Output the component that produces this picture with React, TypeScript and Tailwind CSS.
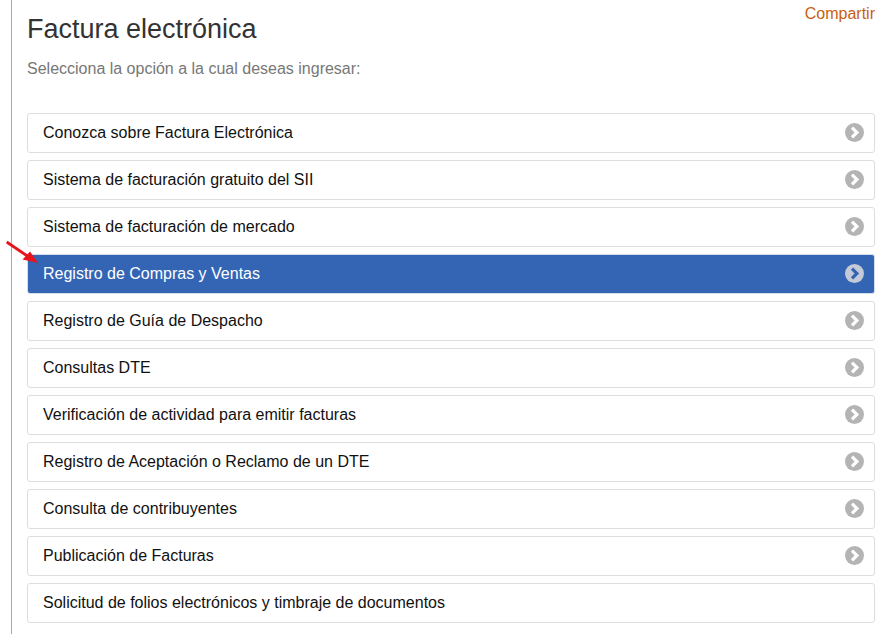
const OPTIONS = [
  { label: "Conozca sobre Factura Electrónica", arrow: true },
  { label: "Sistema de facturación gratuito del SII", arrow: true },
  { label: "Sistema de facturación de mercado", arrow: true },
  { label: "Registro de Compras y Ventas", arrow: true, active: true },
  { label: "Registro de Guía de Despacho", arrow: true },
  { label: "Consultas DTE", arrow: true },
  { label: "Verificación de actividad para emitir facturas", arrow: true },
  { label: "Registro de Aceptación o Reclamo de un DTE", arrow: true },
  { label: "Consulta de contribuyentes", arrow: true },
  { label: "Publicación de Facturas", arrow: true },
  { label: "Solicitud de folios electrónicos y timbraje de documentos", arrow: false },
];

function ChevronCircle({ active }: { active?: boolean }) {
  return (
    <svg
      className={[
        "mb-[2px] h-[19px] w-[19px]",
        active ? "text-[#c3c9d6]" : "text-[#b4b4b4]",
      ].join(" ")}
      viewBox="0 0 19 19"
      aria-hidden
    >
      <circle cx="9.5" cy="9.5" r="9.5" fill="currentColor" />
      <path
        d="M7 4.6 11.9 9.5 7 14.4"
        fill="none"
        stroke={active ? "#3465b5" : "#fff"}
        strokeWidth="3.2"
      />
    </svg>
  );
}

export default function App() {
  return (
    <div className="relative flex h-[634px] w-[891px] overflow-hidden bg-white font-['Liberation_Sans',Arial,sans-serif]">
      <div className="ml-[11px] w-px shrink-0 bg-[#a9a9a9]" />

      <main className="min-w-0 flex-1 pl-[15px] pr-4">
        <div className="flex items-start justify-between">
          <h1 className="pt-[11px] text-[27px] leading-[36px] text-[#333]">Factura electrónica</h1>
          <a className="pt-[4px] text-base leading-[20px] text-[#c8600f]">Compartir</a>
        </div>
        <p className="mt-[3px] text-base leading-[38px] text-[#777]">
          Selecciona la opción a la cual deseas ingresar:
        </p>

        <ul className="mt-[25px] flex flex-col gap-[7px]">
          {OPTIONS.map((option) => (
            <li
              key={option.label}
              className={[
                "flex h-10 items-center justify-between rounded-[3px] border pl-[15px] pr-[10px] text-base",
                option.active
                  ? "border-[#d5dcea] bg-[#3465b5] text-white"
                  : "border-[#ddd] bg-white text-[#111]",
              ].join(" ")}
            >
              <span>{option.label}</span>
              {option.arrow && <ChevronCircle active={option.active} />}
            </li>
          ))}
        </ul>
      </main>

      {/* red annotation arrow over the list */}
      <svg className="absolute left-[4px] top-[238px] h-[28px] w-[36px]" viewBox="0 0 36 28" aria-hidden>
        <path d="M2.7 4 24 18.5" stroke="#e8141c" strokeWidth="2.8" fill="none" />
        <path d="M34 25 18.5 21.5 26 13.5Z" fill="#e8141c" />
      </svg>
    </div>
  );
}
